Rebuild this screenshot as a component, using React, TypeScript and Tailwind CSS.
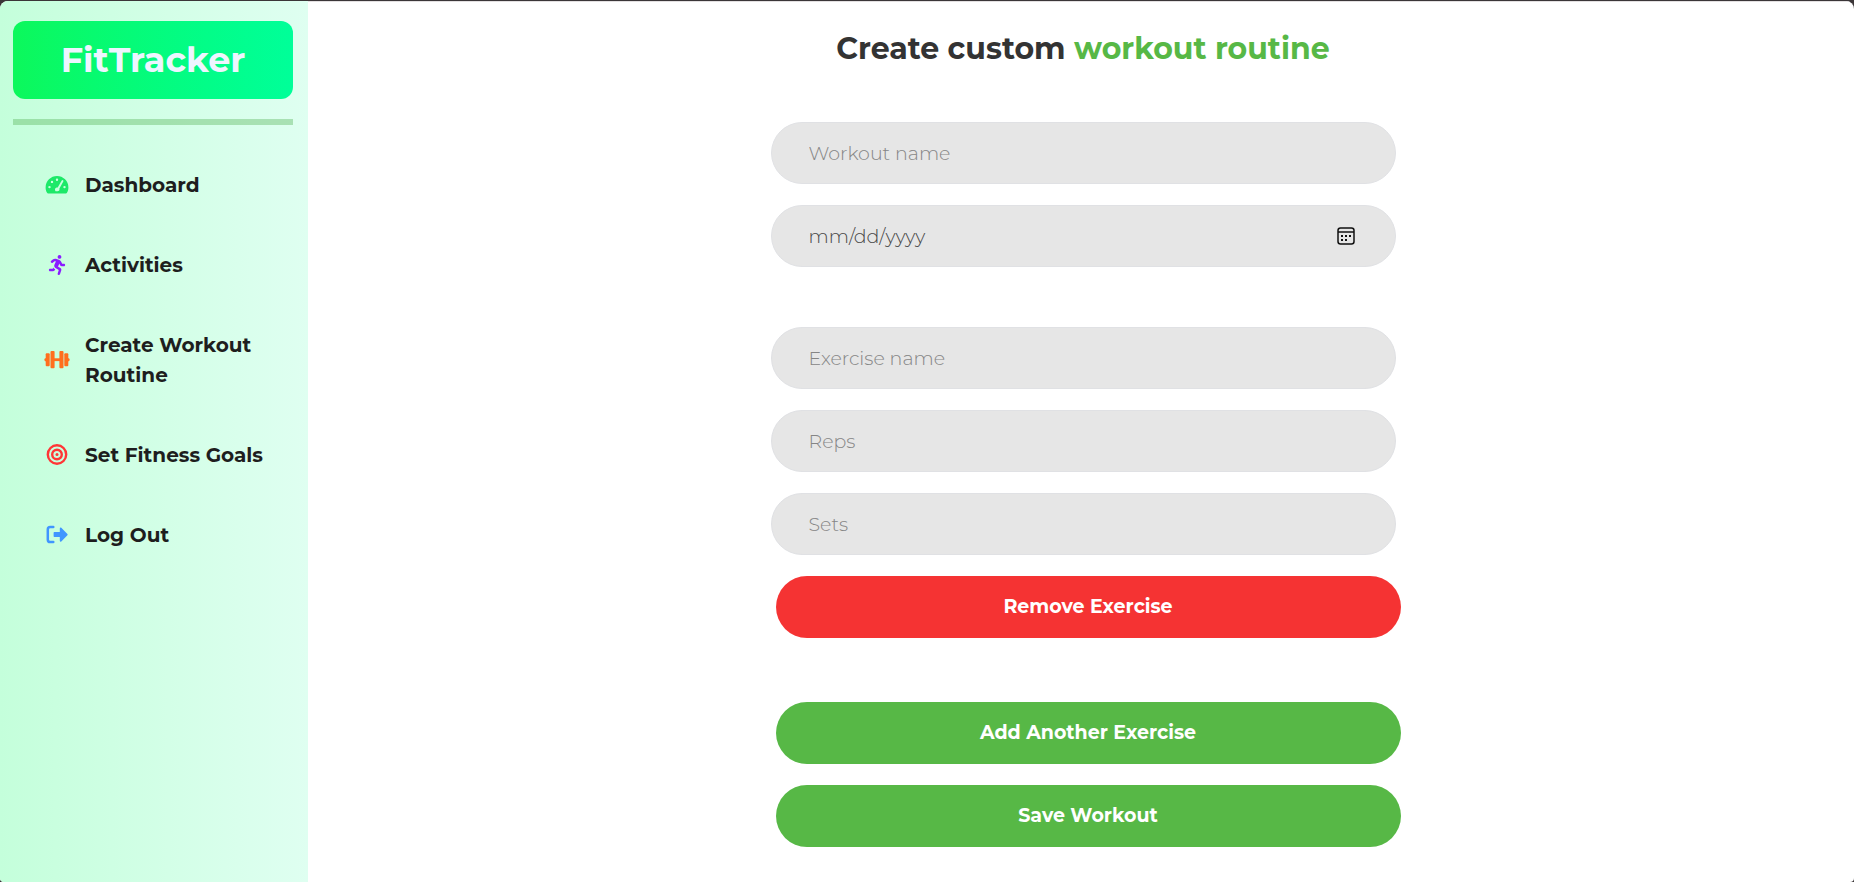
import React from "react";
import type { ReactNode } from "react";
import { FaRunning } from "react-icons/fa";

type NavItem = { label: string; icon: ReactNode };

function GaugeIcon() {
  return (
    <svg viewBox="0 0 24 24" className="size-6 text-[#1ee969]" aria-hidden="true">
      <path
        fill="currentColor"
        fillRule="evenodd"
        d="M12 3A11.4 11.4 0 0 0 .6 14.4c0 2 .5 3.7 1.3 5.2.3.6.7.9 1.3.9h17.6c.6 0 1-.3 1.3-.9.8-1.5 1.3-3.2 1.3-5.2A11.4 11.4 0 0 0 12 3zM12 5.5a1.2 1.2 0 1 1 0 2.4 1.2 1.2 0 0 1 0-2.4zM7 7.7a1.2 1.2 0 1 1 0 2.4 1.2 1.2 0 0 1 0-2.4zM4.5 12.9a1.2 1.2 0 1 1 0 2.4 1.2 1.2 0 0 1 0-2.4zM19.5 12.9a1.2 1.2 0 1 1 0 2.4 1.2 1.2 0 0 1 0-2.4zM18.3 8.5 14.4 15.5A2.2 2.2 0 0 1 12.4 18.2H10.6A2.2 2.2 0 0 1 12.7 14.5L16.7 7.6A.9.9 0 0 1 18.3 8.5z"
      />
    </svg>
  );
}

function BarbellIcon() {
  return (
    <svg viewBox="0 0 26 24" className="h-6 w-[26px] shrink-0 text-[#ff6f1e]" fill="currentColor" aria-hidden="true">
      <rect x="0.5" y="10.2" width="3" height="3" rx="1" />
      <rect x="1.7" y="5.2" width="4" height="13" rx="1" />
      <rect x="6.5" y="3" width="4.1" height="17.2" rx="1" />
      <rect x="10" y="10.3" width="6" height="2.8" />
      <rect x="15.4" y="3" width="4.1" height="17.2" rx="1" />
      <rect x="20.3" y="5.2" width="4" height="13" rx="1" />
      <rect x="22.5" y="10.2" width="3" height="3" rx="1" />
    </svg>
  );
}

function TargetIcon() {
  return (
    <svg viewBox="0 0 24 24" className="size-6 text-[#ff3636]" fill="none" stroke="currentColor" strokeWidth="2.4" aria-hidden="true">
      <circle cx="12" cy="11.5" r="9.2" />
      <circle cx="12" cy="11.5" r="4.8" />
      <circle cx="12" cy="11.5" r="1.5" fill="currentColor" stroke="none" />
    </svg>
  );
}

function ExitIcon() {
  return (
    <svg viewBox="0 0 24 24" className="size-6 text-[#4096ff]" fill="currentColor" aria-hidden="true">
      <path d="M8.3 4.1H5.2a2.4 2.4 0 0 0-2.4 2.4v10.2a2.4 2.4 0 0 0 2.4 2.4h3.1" fill="none" stroke="currentColor" strokeWidth="2.5" strokeLinecap="round" />
      <path d="M9.6 9.1h5.2V5.500c0-.9.9-1.300 1.500-.7l6.100 6.100c.4.400.4 1 0 1.400l-6.100 6.100c-.6.600-1.500.2-1.500-.7V14.100H9.600c-.6 0-1-.4-1-1v-3c0-.6.4-1 1-1z" />
    </svg>
  );
}

function CalendarIcon() {
  return (
    <svg viewBox="0 0 18 18" className="size-[18px]" fill="none" stroke="#111111" aria-hidden="true">
      <rect x="1" y="1" width="16" height="16" rx="2.5" strokeWidth="1.5" />
      <path d="M1 5h16" strokeWidth="1.5" />
      <path d="M4 9h2M8 9h2M12 9h2M4 13h2M8 13h2" strokeWidth="2" />
    </svg>
  );
}

const navItems: NavItem[] = [
  { label: "Dashboard", icon: <GaugeIcon /> },
  { label: "Activities", icon: <FaRunning className="size-5 text-[#8a1cff]" aria-hidden="true" /> },
  { label: "Create Workout Routine", icon: <BarbellIcon /> },
  { label: "Set Fitness Goals", icon: <TargetIcon /> },
  { label: "Log Out", icon: <ExitIcon /> },
];

const fieldClass =
  "block h-[62px] w-full rounded-[31px] border border-[#e0e1e4] bg-[#e6e6e6] px-[37px] text-[19px] font-light text-[#444444] outline-none";

const buttonClass =
  "ml-[5px] block h-[62px] w-full rounded-[31px] text-[19px] font-bold text-white";

function Field({ id, label }: { id: string; label: string }) {
  return (
    <input
      id={id}
      type="text"
      aria-label={label}
      placeholder={label}
      className={fieldClass + " placeholder:text-[#858585]"}
    />
  );
}

function DateField() {
  return (
    <div className="relative">
      <input
        id="workout-date"
        type="text"
        inputMode="numeric"
        aria-label="Workout date"
        placeholder="mm/dd/yyyy"
        className={fieldClass + " placeholder:text-[#484848]"}
      />
      <button type="button" aria-label="Open calendar" className="absolute inset-y-0 right-[41px] flex items-center">
        <CalendarIcon />
      </button>
    </div>
  );
}

export default function App() {
  return (
    <div className="min-h-screen bg-[#3b3638] pt-px font-['Montserrat','Inter',sans-serif]">
      <div className="flex min-h-[calc(100vh-1px)] overflow-hidden rounded-t-lg rounded-b bg-white">
        <aside className="w-[308px] shrink-0 bg-linear-to-r from-[#c4ffdb] to-[#dffff1] pt-5 pr-[15px] pl-[13px]">
          <div className="flex h-[78px] items-center justify-center rounded-xl bg-linear-to-r from-[#0cf85b] to-[#00ff99]">
            <span className="text-[35px] font-bold text-[#eef5ff]">FitTracker</span>
          </div>
          <hr className="mt-5 border-0 bg-[#5ab55a]/40 pt-[6px]" />
          <nav className="mt-[45px]">
            <ul className="flex flex-col gap-[50px] pl-8">
              {navItems.map((item) => (
                <li key={item.label}>
                  <a href="#" className="flex items-center gap-4 text-xl leading-[30px] font-bold text-[#1e1e1e]">
                    <span className="flex w-6 shrink-0 justify-center">{item.icon}</span>
                    <span>{item.label}</span>
                  </a>
                </li>
              ))}
            </ul>
          </nav>
        </aside>

        <main className="flex flex-1 flex-col items-center border-t border-[#e3e0e1] pr-6 pl-7">
          <h1 className="mt-[27px] text-[30px] leading-10 font-bold text-[#333333]">
            Create custom <span className="text-[#57b846]">workout routine</span>
          </h1>
          <form className="mt-[53px] w-full max-w-[625px] pb-[34px]" onSubmit={(event) => event.preventDefault()}>
            <div className="flex flex-col gap-[21px]">
              <Field id="workout-name" label="Workout name" />
              <DateField />
            </div>
            <div className="mt-[60px] flex flex-col gap-[21px]">
              <Field id="exercise-name" label="Exercise name" />
              <Field id="reps" label="Reps" />
              <Field id="sets" label="Sets" />
              <button type="button" className={buttonClass + " bg-[#f53333]"}>Remove Exercise</button>
            </div>
            <div className="mt-16 flex flex-col gap-[21px]">
              <button type="button" className={buttonClass + " bg-[#57b846]"}>Add Another Exercise</button>
              <button type="submit" className={buttonClass + " bg-[#57b846]"}>Save Workout</button>
            </div>
          </form>
        </main>
      </div>
    </div>
  );
}
